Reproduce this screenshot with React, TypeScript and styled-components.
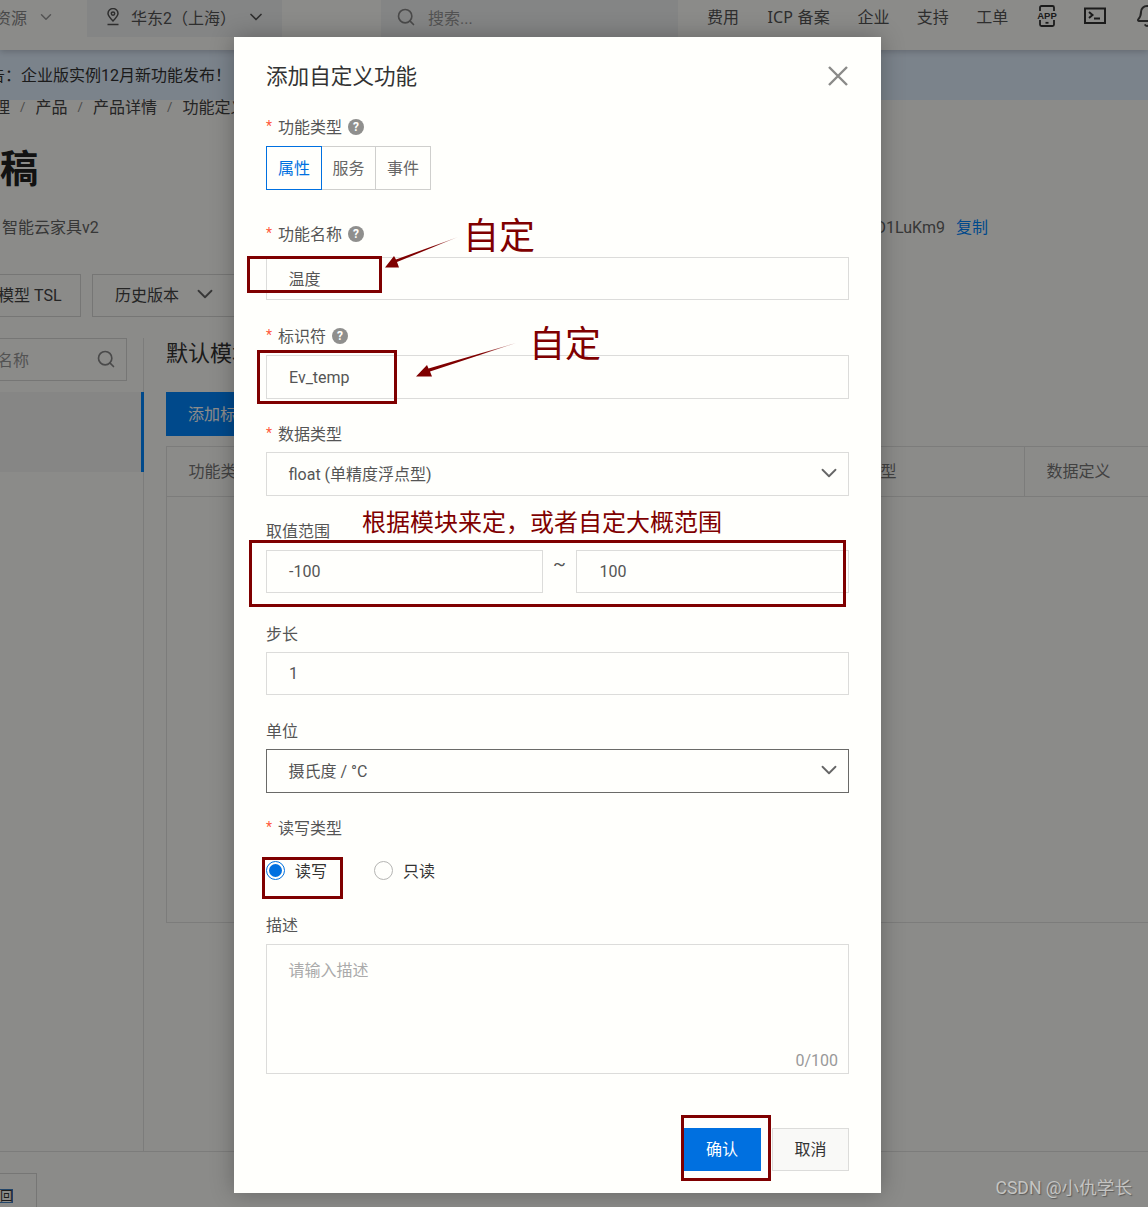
import React from 'react';
import styled, { createGlobalStyle } from 'styled-components';
import { Bell, ChevronDown, Search } from 'lucide-react';

const GlobalStyle = createGlobalStyle`
  html, body {
    margin: 0;
    padding: 0;
    background: #fff;
  }
  * {
    box-sizing: border-box;
  }
  body {
    font-family: Roboto, "Noto Sans CJK SC", sans-serif;
    color: #333;
  }
`;

const RED = '#7f0000';

const Page = styled.div`
  position: relative;
  width: 1148px;
  height: 1207px;
  overflow: hidden;
  background: #fffffc;
  font-size: 16px;
`;

/* ---- console behind the dialog ---- */

const TopBar = styled.header`
  display: flex;
  align-items: flex-start;
  height: 50px;
  background: #fffffc;
  box-shadow: 0 2px 6px rgba(0, 0, 0, 0.18);
  position: relative;
  color: #555;
`;

const Menu = styled.div`
  display: flex;
  flex: none;
  align-items: center;
  gap: 10px;
  height: 34px;
  margin-left: -5px;
  color: #888;
  white-space: nowrap;
`;

const RegionBox = styled.div`
  display: flex;
  flex: none;
  align-items: center;
  width: 195px;
  height: 37px;
  margin-left: 32px;
  padding: 0 0 4px 18px;
  gap: 10px;
  background: #f3f4f4;
  white-space: nowrap;
`;

const SearchBox = styled.div`
  display: flex;
  flex: none;
  align-items: center;
  width: 297px;
  height: 37px;
  margin-left: 99px;
  padding: 0 0 4px 15px;
  gap: 12px;
  background: #f3f4f4;
  color: #999;
`;

const TopLinks = styled.nav`
  display: flex;
  flex: none;
  align-items: center;
  height: 32px;
  margin-left: 29px;
  gap: 27.4px;
  white-space: nowrap;
`;

const IcpLink = styled.span`
  font-family: "Noto Sans", "Noto Sans CJK SC", sans-serif;
  letter-spacing: 0.2px;
  margin-left: 1px;
`;

const TopIcon = styled.span<{ $left: number }>`
  display: flex;
  margin-left: ${(p) => p.$left}px;
`;

const Notice = styled.div`
  display: flex;
  align-items: center;
  height: 50px;
  margin-left: -11px;
  padding-bottom: 2px;
  background: #e2f0ff;
  color: #333;
  white-space: nowrap;
  box-shadow: 11px 0 0 #e2f0ff, 600px 0 0 #e2f0ff;
`;

const Crumbs = styled.div`
  display: flex;
  align-items: center;
  height: 14px;
  margin-left: -6px;
  padding-bottom: 2px;
  color: #444;
  white-space: nowrap;
`;

const Slash = styled.span`
  width: 25.5px;
  text-align: center;
  font-size: 13px;
  color: #888;
`;

const PageTitle = styled.h1`
  margin: 31px 0 0;
  height: 48px;
  font-size: 38px;
  line-height: 48px;
  font-weight: 700;
  color: #222;
`;

const MetaRow = styled.div`
  display: flex;
  justify-content: space-between;
  height: 20px;
  line-height: 20px;
  margin-top: 25px;
  padding: 0 160px 0 2px;
  color: #666;
`;

const CopyLink = styled.span`
  margin-left: 11px;
  color: #0087ff;
`;

const Toolbar = styled.div`
  display: flex;
  gap: 11px;
  margin: 36px 0 0 -19px;
`;

const ToolButton = styled.div<{ $width: number; $pad: number }>`
  display: flex;
  align-items: center;
  gap: 13px;
  width: ${(p) => p.$width}px;
  height: 43px;
  padding: 0 0 3px ${(p) => p.$pad}px;
  border: 1px solid #d8d8d6;
  color: #444;
  white-space: nowrap;
`;

const Workspace = styled.div`
  display: flex;
  height: 813px;
  margin-top: 21px;
`;

const Sidebar = styled.aside`
  width: 144px;
  flex: none;
  border-right: 1px solid #e4e4e2;
`;

const SideSearch = styled.div`
  display: flex;
  align-items: center;
  justify-content: space-between;
  width: 147px;
  height: 43px;
  margin-left: -20px;
  padding: 0 10px 2px 16px;
  border: 1px solid #d8d8d6;
  color: #999;
`;

const SideItem = styled.div`
  height: 80px;
  margin-top: 11px;
  margin-right: -1px;
  background: #f6f6f4;
  border-right: 3px solid #0087ff;
`;

const Main = styled.main`
  flex: 1;
  min-width: 0;
  padding-left: 22px;
`;

const SectionTitle = styled.h2`
  margin: 0;
  height: 32px;
  font-size: 22px;
  line-height: 32px;
  font-weight: 400;
  color: #333;
`;

const AddButton = styled.div`
  display: flex;
  align-items: center;
  width: 200px;
  height: 44px;
  margin-top: 22px;
  padding: 0 0 2px 22px;
  background: #0087ff;
  color: #fff;
`;

const Table = styled.div`
  height: 477px;
  margin-top: 10px;
  margin-right: -2px;
  border: 1px solid #e4e4e2;
`;

const TableHead = styled.div`
  display: flex;
  height: 50px;
  border-bottom: 1px solid #e4e4e2;
  color: #777;
`;

const HeadCell = styled.div<{ $width?: number; $divided?: boolean }>`
  display: flex;
  align-items: center;
  padding: 0 0 3px 21.5px;
  flex: ${(p) => (p.$width ? 'none' : 1)};
  width: ${(p) => (p.$width ? `${p.$width}px` : 'auto')};
  border-left: ${(p) => (p.$divided ? '1px solid #e4e4e2' : '0')};
`;

const Footer = styled.footer`
  height: 56px;
  padding-top: 21px;
  border-top: 1px solid #e4e4e2;
`;

const BackButton = styled.div`
  display: flex;
  align-items: flex-start;
  justify-content: flex-end;
  width: 37px;
  height: 40px;
  padding: 15px 23px 0 0;
  border: 1px solid #d8d8d6;
  border-left: 0;
`;

const BackGlyph = styled.span`
  display: block;
  width: 14px;
  height: 14px;
  line-height: 12px;
  font-size: 13px;
  text-align: center;
  border: 1px solid #3f7fc0;
  color: #333;
`;

const Scrim = styled.div`
  position: absolute;
  inset: 0;
  background: rgba(0, 0, 0, 0.455);
`;

/* ---- dialog ---- */

const Dialog = styled.section`
  position: absolute;
  left: 234px;
  top: 37px;
  width: 647px;
  height: 1156px;
  padding: 0 32px;
  background: #fffffc;
  box-shadow: 0 0 22px rgba(0, 0, 0, 0.28);
`;

const DialogHead = styled.div`
  display: flex;
  align-items: center;
  justify-content: space-between;
  height: 80px;
`;

const DialogTitle = styled.h3`
  margin: 0;
  padding-bottom: 6px;
  font-size: 21.6px;
  font-weight: 400;
  color: #333;
`;

const CloseButton = styled.span`
  display: flex;
  margin: 0 1px 2px 0;
`;

const Field = styled.div<{ $top?: number }>`
  margin-top: ${(p) => p.$top ?? 0}px;
`;

const Label = styled.div<{ $gap: number }>`
  display: flex;
  align-items: center;
  height: 20px;
  padding-bottom: 2px;
  margin-bottom: ${(p) => p.$gap}px;
  font-size: 16px;
  color: #555;
`;

const Star = styled.span`
  width: 12px;
  color: #ff5a3c;
  font-size: 14px;
`;

const Help = styled.span`
  display: inline-flex;
  align-items: center;
  justify-content: center;
  width: 16px;
  height: 16px;
  margin-left: 6px;
  border-radius: 50%;
  background: #8f8f8d;
  color: #fffffc;
  font-size: 12px;
  font-weight: 700;
  transform: translateY(1px);
`;

const Segments = styled.div`
  display: flex;
  height: 44px;
`;

const Segment = styled.div<{ $active?: boolean; $width: number }>`
  display: flex;
  align-items: center;
  justify-content: center;
  width: ${(p) => p.$width}px;
  padding-bottom: 3px;
  margin-left: ${(p) => (p.$active ? 0 : -1)}px;
  border: 1px solid ${(p) => (p.$active ? '#0070e0' : '#cfcfcd')};
  color: ${(p) => (p.$active ? '#0070e0' : '#666')};
  position: ${(p) => (p.$active ? 'relative' : 'static')};
`;

const Input = styled.div<{ $height?: number; $width?: number; $dark?: boolean; $latin?: boolean }>`
  display: flex;
  align-items: center;
  justify-content: space-between;
  width: ${(p) => (p.$width ? `${p.$width}px` : '100%')};
  height: ${(p) => p.$height ?? 43}px;
  padding: 0 6px ${(p) => (p.$latin ? 0 : 2)}px ${(p) => (p.$latin ? 22 : 21.5)}px;
  border: 1px solid ${(p) => (p.$dark ? '#6a6a68' : '#dcdcda')};
  color: #555;
  font-size: 16px;
`;

const RangeRow = styled.div`
  display: flex;
  align-items: center;
`;

const Tilde = styled.span`
  width: 34px;
  text-align: center;
  margin-top: -16px;
  font-size: 19px;
  color: #555;
`;

const Radios = styled.div`
  display: flex;
  align-items: center;
  height: 33px;
`;

const RadioDot = styled.span<{ $on?: boolean }>`
  display: flex;
  align-items: center;
  justify-content: center;
  width: 19px;
  height: 19px;
  margin-right: 10px;
  border-radius: 50%;
  border: 1px solid ${(p) => (p.$on ? '#0070e0' : '#b5b5b3')};
  &::after {
    content: '';
    display: ${(p) => (p.$on ? 'block' : 'none')};
    width: 13px;
    height: 13px;
    border-radius: 50%;
    background: #0070e0;
  }
`;

const RadioText = styled.span`
  margin-right: 47px;
  padding-bottom: 1px;
  color: #333;
`;

const TextArea = styled.div`
  display: flex;
  flex-direction: column;
  justify-content: space-between;
  height: 130px;
  padding: 12px 10px 3px 21.5px;
  border: 1px solid #dcdcda;
  color: #aaa;
`;

const Counter = styled.span`
  align-self: flex-end;
  color: #999;
`;

const Actions = styled.div`
  display: flex;
  justify-content: flex-end;
  gap: 11px;
  margin-top: 54px;
`;

const Btn = styled.div<{ $primary?: boolean }>`
  display: flex;
  align-items: center;
  justify-content: center;
  width: ${(p) => (p.$primary ? 78 : 77)}px;
  height: 43px;
  padding-bottom: 3px;
  background: ${(p) => (p.$primary ? '#0070e0' : '#f9f9f7')};
  border: 1px solid ${(p) => (p.$primary ? '#0070e0' : '#dcdcda')};
  color: ${(p) => (p.$primary ? '#fff' : '#333')};
`;

/* ---- red annotations drawn over the shot ---- */

const MarkBox = styled.div<{ $x: number; $y: number; $w: number; $h: number }>`
  position: absolute;
  left: ${(p) => p.$x}px;
  top: ${(p) => p.$y}px;
  width: ${(p) => p.$w}px;
  height: ${(p) => p.$h}px;
  border: 3px solid ${RED};
`;

const MarkText = styled.span<{ $x: number; $y: number; $size: number }>`
  position: absolute;
  left: ${(p) => p.$x}px;
  top: ${(p) => p.$y}px;
  font-size: ${(p) => p.$size}px;
  line-height: 1.2;
  color: ${RED};
  white-space: nowrap;
`;

const Arrows = styled.svg`
  position: absolute;
  left: 0;
  top: 0;
`;

const Watermark = styled.span`
  position: absolute;
  right: 16px;
  top: 1176px;
  font-size: 17.6px;
  line-height: 24px;
  color: #c4c4c2;
  text-shadow: 1px 1px 1px rgba(60, 60, 60, 0.6);
  white-space: nowrap;
`;

const PinIcon = () => (
  <svg width="16" height="18" viewBox="0 0 16 18" fill="none" stroke="#555" strokeWidth="1.5">
    <path d="M8 13C5 10 3 8 3 5.6a5 5 0 0 1 10 0C13 8 11 10 8 13z" />
    <circle cx="8" cy="5.6" r="1.7" />
    <path d="M2.5 16.5h11" />
  </svg>
);

const AppIcon = () => (
  <svg width="22" height="22" viewBox="0 0 22 22" fill="none" stroke="#333" strokeWidth="1.8">
    <path d="M4 6V2.5A1.5 1.5 0 0 1 5.5 1h11A1.5 1.5 0 0 1 18 2.5V6M4 15v4.5A1.5 1.5 0 0 0 5.5 21h11a1.5 1.5 0 0 0 1.5-1.5V15" />
    <path d="M9.5 17.8h3" />
    <text x="11" y="14" textAnchor="middle" fontSize="9.5" fontWeight="700" fill="#333" stroke="none" fontFamily="Liberation Sans, sans-serif">
      APP
    </text>
  </svg>
);

const TerminalIcon = () => (
  <svg width="22" height="18" viewBox="0 0 22 18" fill="none" stroke="#333" strokeWidth="2">
    <rect x="1" y="1.5" width="20" height="14.5" />
    <path d="M5 5l3.5 3L5 11M10 11.5h6" />
  </svg>
);

const HelpMark = () => <Help>?</Help>;

export default function App() {
  return (
    <Page>
      <GlobalStyle />

      <TopBar>
        <Menu>
          资源
          <ChevronDown size={18} color="#999" />
        </Menu>
        <RegionBox>
          <PinIcon />
          华东2（上海）
          <ChevronDown size={20} color="#555" />
        </RegionBox>
        <SearchBox>
          <Search size={20} color="#888" />
          搜索...
        </SearchBox>
        <TopLinks>
          <span>费用</span>
          <IcpLink>ICP 备案</IcpLink>
          <span>企业</span>
          <span>支持</span>
          <span>工单</span>
          <TopIcon $left={0}>
            <AppIcon />
          </TopIcon>
          <TopIcon $left={-1}>
            <TerminalIcon />
          </TopIcon>
          <TopIcon $left={2}>
            <Bell size={24} color="#444" />
          </TopIcon>
        </TopLinks>
      </TopBar>

      <Notice>告：企业版实例12月新功能发布！</Notice>

      <Crumbs>
        理<Slash>/</Slash>产品<Slash>/</Slash>产品详情<Slash>/</Slash>功能定义
      </Crumbs>

      <PageTitle>稿</PageTitle>

      <MetaRow>
        <span>智能云家具v2</span>
        <span>
          a1D1LuKm9<CopyLink>复制</CopyLink>
        </span>
      </MetaRow>

      <Toolbar>
        <ToolButton $width={100} $pad={16}>
          模型 TSL
        </ToolButton>
        <ToolButton $width={200} $pad={22}>
          历史版本
          <ChevronDown size={26} strokeWidth={1.7} color="#666" />
        </ToolButton>
      </Toolbar>

      <Workspace>
        <Sidebar>
          <SideSearch>
            名称
            <Search size={20} color="#888" />
          </SideSearch>
          <SideItem />
        </Sidebar>
        <Main>
          <SectionTitle>默认模块</SectionTitle>
          <AddButton>添加标准功能</AddButton>
          <Table>
            <TableHead>
              <HeadCell>功能类型</HeadCell>
              <HeadCell $width={213}>数据类型</HeadCell>
              <HeadCell $width={125} $divided>
                数据定义
              </HeadCell>
            </TableHead>
          </Table>
        </Main>
      </Workspace>

      <Footer>
        <BackButton>
          <BackGlyph>回</BackGlyph>
        </BackButton>
      </Footer>

      <Scrim />

      <Dialog>
        <DialogHead>
          <DialogTitle>添加自定义功能</DialogTitle>
          <CloseButton>
            <svg width="20" height="20" viewBox="0 0 20 20" stroke="#8a8a88" strokeWidth="2.4">
              <path d="M1 1l18 18M19 1L1 19" />
            </svg>
          </CloseButton>
        </DialogHead>

        <Field>
          <Label $gap={9}>
            <Star>*</Star>功能类型
            <HelpMark />
          </Label>
          <Segments>
            <Segment $active $width={56}>
              属性
            </Segment>
            <Segment $width={55}>服务</Segment>
            <Segment $width={56}>事件</Segment>
          </Segments>
        </Field>

        <Field $top={34}>
          <Label $gap={13}>
            <Star>*</Star>功能名称
            <HelpMark />
          </Label>
          <Input>温度</Input>
        </Field>

        <Field $top={26}>
          <Label $gap={9}>
            <Star>*</Star>标识符
            <HelpMark />
          </Label>
          <Input $height={44} $latin>
            Ev_temp
          </Input>
        </Field>

        <Field $top={25}>
          <Label $gap={8}>
            <Star>*</Star>数据类型
          </Label>
          <Input $height={44}>
            float (单精度浮点型)
            <ChevronDown size={26} strokeWidth={1.7} color="#666" />
          </Input>
        </Field>

        <Field $top={25}>
          <Label $gap={9}>取值范围</Label>
          <RangeRow>
            <Input $width={277} $latin>
              -100
            </Input>
            <Tilde>~</Tilde>
            <Input $width={273} $latin>
              100
            </Input>
          </RangeRow>
        </Field>

        <Field $top={31}>
          <Label $gap={8}>步长</Label>
          <Input $latin>1</Input>
        </Field>

        <Field $top={26}>
          <Label $gap={8}>单位</Label>
          <Input $height={44} $dark>
            摄氏度 / °C
            <ChevronDown size={26} strokeWidth={1.7} color="#666" />
          </Input>
        </Field>

        <Field $top={25}>
          <Label $gap={16}>
            <Star>*</Star>读写类型
          </Label>
          <Radios>
            <RadioDot $on />
            <RadioText>读写</RadioText>
            <RadioDot />
            <RadioText>只读</RadioText>
          </Radios>
        </Field>

        <Field $top={28}>
          <Label $gap={9}>描述</Label>
          <TextArea>
            请输入描述
            <Counter>0/100</Counter>
          </TextArea>
        </Field>

        <Actions>
          <Btn $primary>确认</Btn>
          <Btn>取消</Btn>
        </Actions>
      </Dialog>

      <MarkBox $x={247} $y={256} $w={135} $h={37} />
      <MarkBox $x={257} $y={350} $w={140} $h={54} />
      <MarkBox $x={249} $y={540} $w={597} $h={67} />
      <MarkBox $x={262} $y={857} $w={81} $h={42} />
      <MarkBox $x={681} $y={1115} $w={90} $h={66} />

      <MarkText $x={463} $y={216} $size={36}>
        自定
      </MarkText>
      <MarkText $x={529} $y={324} $size={36}>
        自定
      </MarkText>
      <MarkText $x={362} $y={509} $size={24}>
        根据模块来定，或者自定大概范围
      </MarkText>

      <Arrows width="1148" height="1207" viewBox="0 0 1148 1207">
        <defs>
          <linearGradient id="tail1" x1="458" y1="237" x2="386" y2="267" gradientUnits="userSpaceOnUse">
            <stop offset="0" stopColor={RED} stopOpacity="0.3" />
            <stop offset="0.35" stopColor={RED} />
          </linearGradient>
          <linearGradient id="tail2" x1="516" y1="343" x2="417" y2="376" gradientUnits="userSpaceOnUse">
            <stop offset="0" stopColor={RED} stopOpacity="0.3" />
            <stop offset="0.35" stopColor={RED} />
          </linearGradient>
        </defs>
        <polygon points="458,237 397,262 399,267.5 385,267.5 394,256 396,259.5" fill="url(#tail1)" />
        <polygon points="516,343 430,371.5 432,376.5 416,376.5 427,365 428.5,368.5" fill="url(#tail2)" />
      </Arrows>

      <Watermark>CSDN @小仇学长</Watermark>
    </Page>
  );
}
